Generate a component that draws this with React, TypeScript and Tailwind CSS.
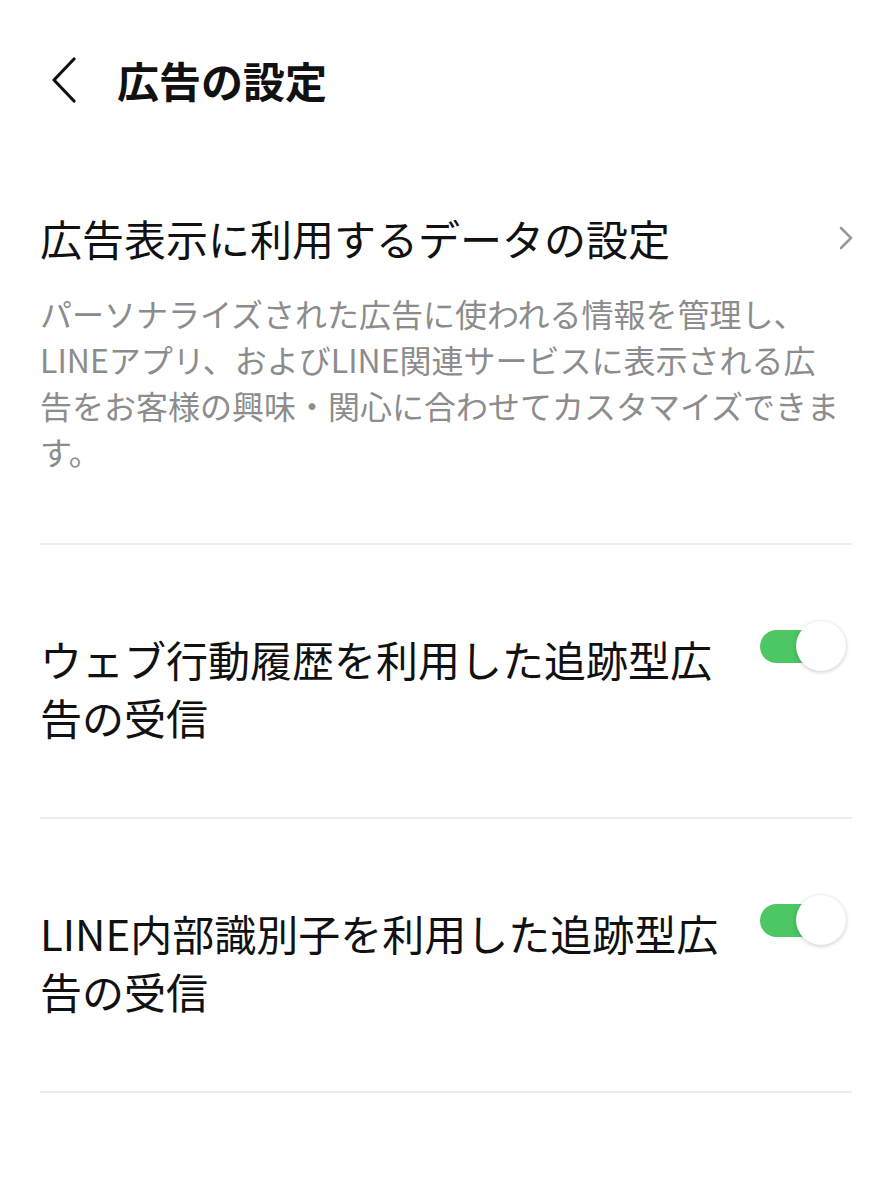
// 広告の設定 画面 (LINE 設定)
import { useState } from 'react'

const font = { fontFamily: '"Noto Sans CJK JP", "Noto Sans", sans-serif' }

function Toggle({ on, onChange }: { on: boolean; onChange: () => void }) {
  return (
    <button
      onClick={onChange}
      className="relative w-[86px] h-[50px] shrink-0"
      aria-pressed={on}
    >
      <span
        className={`absolute left-0 top-[9px] h-[33px] w-[62px] rounded-full ${on ? 'bg-[#4cc764]' : 'bg-[#d9d9d9]'}`}
      />
      <span className="absolute right-0 top-0 w-[50px] h-[50px] rounded-full bg-white shadow-[0_1px_4px_rgba(0,0,0,0.22)]" />
    </button>
  )
}

function ToggleRow({ lines, on, onChange }: { lines: string[]; on: boolean; onChange: () => void }) {
  return (
    <div className="flex items-start justify-between pt-[76px] pb-[71px] border-b-2 border-[#ececec]">
      <div className="pt-[9px] text-[42px] leading-[58px] text-[#111]">
        {lines.map((l) => (
          <div key={l} className="whitespace-nowrap">{l}</div>
        ))}
      </div>
      <div className="mr-[6px]">
        <Toggle on={on} onChange={onChange} />
      </div>
    </div>
  )
}

export default function App() {
  const [web, setWeb] = useState(true)
  const [internal, setInternal] = useState(true)

  return (
    <div className="w-[892px] min-h-[1200px] bg-white" style={font}>
      {/* Header */}
      <div className="flex items-center pt-[52px] pl-[50px]">
        <svg width="28" height="46" viewBox="0 0 28 46" fill="none" className="shrink-0">
          <path d="M24 2 L4 23 L24 44" stroke="#111" strokeWidth="3.2" strokeLinecap="round" strokeLinejoin="round" />
        </svg>
        <h1 className="ml-[39px] text-[42px] leading-[56px] font-bold text-[#111]">広告の設定</h1>
      </div>

      <div className="px-[40px]">
        {/* データの設定 */}
        <div className="pt-[102px] pb-[69px] border-b-2 border-[#ececec]">
          <div className="flex items-center justify-between">
            <div className="text-[42px] leading-[56px] text-[#111] whitespace-nowrap">
              広告表示に利用するデータの設定
            </div>
            <svg width="16" height="26" viewBox="0 0 16 26" fill="none" className="mr-[-2px]">
              <path d="M3 3 L13 13 L3 23" stroke="#9a9a9a" strokeWidth="2.6" strokeLinecap="round" strokeLinejoin="round" />
            </svg>
          </div>
          <div className="mt-[24px] text-[32px] leading-[46px] text-[#8c8c8c]">
            <div className="whitespace-nowrap">パーソナライズされた広告に使われる情報を管理し、</div>
            <div className="whitespace-nowrap">LINEアプリ、およびLINE関連サービスに表示される広</div>
            <div className="whitespace-nowrap">告をお客様の興味・関心に合わせてカスタマイズできま</div>
            <div className="whitespace-nowrap">す。</div>
          </div>
        </div>

        <ToggleRow
          lines={['ウェブ行動履歴を利用した追跡型広', '告の受信']}
          on={web}
          onChange={() => setWeb(!web)}
        />
        <ToggleRow
          lines={['LINE内部識別子を利用した追跡型広', '告の受信']}
          on={internal}
          onChange={() => setInternal(!internal)}
        />
      </div>
    </div>
  )
}
